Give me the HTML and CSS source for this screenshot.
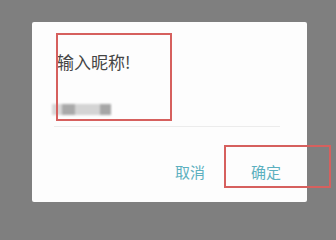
FILE: index.html
```html
<!DOCTYPE html>
<html lang="zh">
<head>
<meta charset="utf-8">
<link rel="stylesheet" href="styles.css">
</head>
<body>
<div class="dialog">
  <div class="content">
    <div class="title">输入昵称!</div>
    <div class="field">
      <div class="blurred">
        <span class="b1"></span><span class="b2"></span><span class="b3"></span><span class="b4"></span>
      </div>
    </div>
  </div>
  <div class="actions">
    <button class="btn">取消</button>
    <button class="btn">确定</button>
  </div>
</div>
<div class="mark mark-a"></div>
<div class="mark mark-b"></div>
</body>
</html>
```
FILE: styles.css
```css
html, body {
  margin: 0;
  padding: 0;
}
body {
  width: 336px;
  height: 234px;
  background: #7f7f7f;
  font-family: "Noto Sans CJK SC", "Noto Sans", sans-serif;
  position: relative;
  overflow: hidden;
  padding-top: 22px;
  box-sizing: border-box;
}
.dialog {
  margin-left: 32px;
  width: 275px;
  height: 180px;
  background: #fdfdfd;
  border-radius: 2px;
  display: flex;
  flex-direction: column;
  box-sizing: border-box;
}
.content {
  padding: 30px 27px 0 22px;
  display: flex;
  flex-direction: column;
}
.title {
  font-size: 17px;
  line-height: 20px;
  color: #454545;
  padding-left: 3px;
}
.field {
  margin-top: 20px;
  height: 34px;
  border-bottom: 1px solid #ececec;
  display: flex;
  align-items: center;
}
.blurred {
  display: flex;
  height: 11px;
  margin-left: -2px;
  filter: blur(1px);
}
.blurred span {
  display: block;
  height: 11px;
}
.b1 { width: 10px; background: #d8d8d8; }
.b2 { width: 13px; background: #a9a9a9; }
.b3 { width: 25px; background: #d4d4d4; }
.b4 { width: 11px; background: #a6a6a6; }
.actions {
  margin-top: auto;
  padding: 0 11px 20px 0;
  display: flex;
  justify-content: flex-end;
  gap: 16px;
}
.btn {
  font-family: inherit;
  font-size: 15px;
  line-height: 20px;
  color: #5cb0bf;
  background: none;
  border: 0;
  padding: 0 15px;
  margin: 0;
}
.mark {
  position: absolute;
  border: 2px solid #d6605e;
  box-sizing: border-box;
}
.mark-a {
  left: 56px;
  top: 33px;
  width: 116px;
  height: 88px;
}
.mark-b {
  left: 224px;
  top: 145px;
  width: 107px;
  height: 43px;
}
```
